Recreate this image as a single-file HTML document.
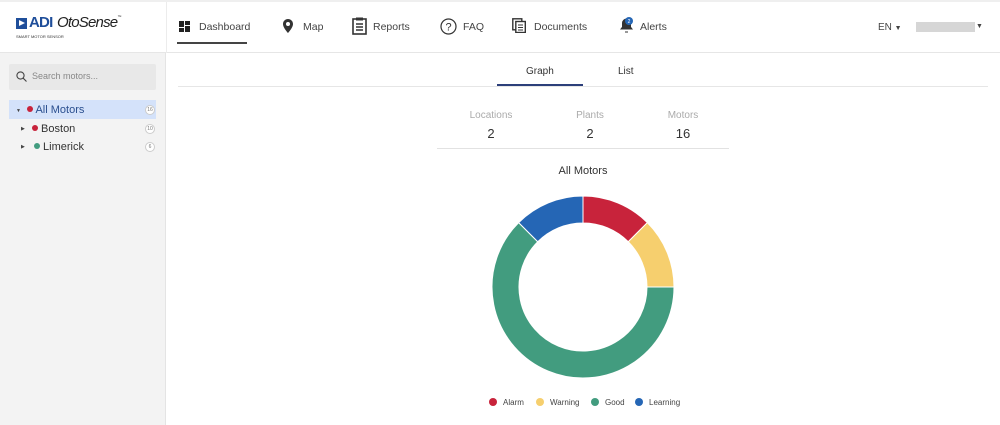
<!DOCTYPE html>
<html><head><meta charset="utf-8"><style>
*{box-sizing:border-box;margin:0;padding:0}
body{width:1000px;height:425px;overflow:hidden;background:#fff;font-family:"Liberation Sans",sans-serif;color:#333;position:relative}
.abs{position:absolute}
.top{left:0;top:0;width:1000px;height:2px;background:#efefef}
.hdr{left:0;top:52px;width:1000px;height:1px;background:#e6e6e6}
.side{left:0;top:53px;width:166px;height:372px;background:#f3f3f3;border-right:1px solid #e4e4e4}
.vline{left:166px;top:2px;width:1px;height:51px;background:#ececec}
.nav{font-size:10.5px;color:#444;top:21px}
.search{left:9px;top:64px;width:147px;height:26px;background:#e8e8e8;border-radius:2px}
.tree{font-size:11px;color:#333}
.dot{display:inline-block;width:6px;height:6px;border-radius:50%}
.badge{width:10px;height:10px;border-radius:50%;border:1px solid #ccc;font-size:5px;text-align:center;line-height:8px;color:#777;background:#fff}
.lbl{font-size:10px;color:#aaa;text-align:center;width:80px}
.num{font-size:13px;color:#333;text-align:center;width:80px}
.leg{font-size:8px;color:#444;top:398px}
.ld{display:inline-block;width:8px;height:8px;border-radius:50%;vertical-align:-1px;margin-right:6px}
</style></head><body>
<div class="abs top"></div>
<div class="abs hdr"></div>
<div class="abs vline"></div>
<div class="abs" style="left:16px;top:18px;width:11px;height:11px;background:#1f4e9a"></div>
<div class="abs" style="left:19px;top:20px;width:0;height:0;border-left:6px solid #fff;border-top:3.5px solid transparent;border-bottom:3.5px solid transparent"></div>
<div class="abs" style="left:29px;top:14px;font-size:15px;font-weight:bold;color:#1f4e9a;letter-spacing:-0.8px">ADI</div>
<div class="abs" style="left:57px;top:14px;font-size:15px;font-style:italic;color:#222;letter-spacing:-0.8px">OtoSense<span style="font-size:4px;vertical-align:top">™</span></div>
<div class="abs" style="left:16px;top:34px;font-size:4px;color:#333">SMART MOTOR SENSOR</div>
<svg class="abs" style="left:179px;top:21px" width="11" height="11"><rect x="0" y="0" width="5" height="6" fill="#222"/><rect x="6" y="0" width="5" height="4" fill="#222"/><rect x="0" y="7" width="5" height="4" fill="#222"/><rect x="6" y="5" width="5" height="6" fill="#222"/></svg>
<div class="abs nav" style="left:199px">Dashboard</div>
<div class="abs" style="left:177px;top:42px;width:70px;height:2px;background:#444"></div>
<svg class="abs" style="left:283px;top:19px" width="10" height="14"><path d="M5 0C2.2 0 0 2.2 0 5c0 3.7 5 9 5 9s5-5.3 5-9C10 2.2 7.8 0 5 0zm0 7a2 2 0 110-4 2 2 0 010 4z" fill="#333"/></svg>
<div class="abs nav" style="left:303px">Map</div>
<svg class="abs" style="left:352px;top:17px" width="15" height="18"><rect x="1" y="2" width="13" height="15" fill="none" stroke="#333" stroke-width="1.6"/><rect x="4" y="0.5" width="7" height="3" fill="#333"/><path d="M4 7h7M4 10h7M4 13h7" stroke="#333" stroke-width="1.4"/></svg>
<div class="abs nav" style="left:373px">Reports</div>
<svg class="abs" style="left:440px;top:18px" width="17" height="17"><circle cx="8.5" cy="8.5" r="7.5" fill="none" stroke="#333" stroke-width="1.2"/><text x="8.5" y="12.5" font-size="11" text-anchor="middle" fill="#333" font-family="Liberation Sans">?</text></svg>
<div class="abs nav" style="left:463px">FAQ</div>
<svg class="abs" style="left:512px;top:18px" width="14" height="15"><rect x="0.8" y="0.8" width="9" height="11" fill="none" stroke="#333" stroke-width="1.4"/><rect x="3.8" y="3.5" width="9.5" height="11" fill="#fff" stroke="#333" stroke-width="1.4"/><path d="M6 7h5M6 9.5h5M6 12h5" stroke="#333" stroke-width="1"/></svg>
<div class="abs nav" style="left:534px">Documents</div>
<svg class="abs" style="left:619px;top:16px" width="16" height="17"><path d="M6 16h3M2 13h11l-1.5-2V7a4 4 0 00-8 0v4z" fill="#333" stroke="#333"/><circle cx="10" cy="5" r="4" fill="#2566b5"/><text x="10" y="7" font-size="5" fill="#fff" text-anchor="middle" font-family="Liberation Sans">2</text></svg>
<div class="abs nav" style="left:640px">Alerts</div>
<div class="abs nav" style="left:878px;font-size:10px;top:22px">EN <span style="font-size:7px">▼</span></div>
<div class="abs" style="left:916px;top:22px;width:59px;height:10px;background:#d6d6d6"></div>
<div class="abs" style="left:976px;top:23px;font-size:7px;color:#444">▼</div>
<div class="abs side"></div>
<div class="abs search"></div>
<svg class="abs" style="left:16px;top:71px" width="11" height="11"><circle cx="4.5" cy="4.5" r="3.6" fill="none" stroke="#444" stroke-width="1.1"/><path d="M7.2 7.2L10.5 10.5" stroke="#444" stroke-width="1.1"/></svg>
<div class="abs" style="left:32px;top:71px;font-size:9px;color:#888">Search motors...</div>
<div class="abs" style="left:9px;top:100px;width:147px;height:19px;background:#d4e2fa"></div>
<div class="abs" style="left:16px;top:108px;font-size:5px;color:#444">▼</div>
<div class="abs tree" style="left:27px;top:104px"><span class="dot" style="background:#c8233b;vertical-align:1px"></span> <span style="color:#2a4f8f">All Motors</span></div>
<div class="abs badge" style="left:145px;top:105px">16</div>
<div class="abs" style="left:21px;top:126px;font-size:5px;color:#444">▶</div>
<div class="abs tree" style="left:32px;top:123px"><span class="dot" style="background:#c8233b;vertical-align:1px"></span> Boston</div>
<div class="abs badge" style="left:145px;top:124px">10</div>
<div class="abs" style="left:21px;top:144px;font-size:5px;color:#444">▶</div>
<div class="abs tree" style="left:34px;top:141px"><span class="dot" style="background:#429c7f;vertical-align:1px"></span> Limerick</div>
<div class="abs badge" style="left:145px;top:142px">6</div>
<div class="abs" style="left:526px;top:66px;font-size:10px;color:#333">Graph</div>
<div class="abs" style="left:618px;top:66px;font-size:10px;color:#333">List</div>
<div class="abs" style="left:178px;top:86px;width:810px;height:1px;background:#e6e6e6"></div>
<div class="abs" style="left:497px;top:84px;width:86px;height:2px;background:#2c3f7a"></div>
<div class="abs lbl" style="left:451px;top:110px">Locations</div>
<div class="abs num" style="left:451px;top:126px">2</div>
<div class="abs lbl" style="left:550px;top:110px">Plants</div>
<div class="abs num" style="left:550px;top:126px">2</div>
<div class="abs lbl" style="left:643px;top:110px">Motors</div>
<div class="abs num" style="left:643px;top:126px">16</div>
<div class="abs" style="left:437px;top:148px;width:292px;height:1px;background:#e2e2e2"></div>
<div class="abs" style="left:533px;top:165px;width:100px;text-align:center;font-size:11px;color:#333">All Motors</div>
<svg class="abs" style="left:0;top:0" width="1000" height="425">
<g stroke="#fff" stroke-width="1">
<path d="M583,196 A91,91 0 0 1 647.35,222.65 L628.25,241.75 A64,64 0 0 0 583,223 Z" fill="#c8233b"/>
<path d="M647.35,222.65 A91,91 0 0 1 674,287 L647,287 A64,64 0 0 0 628.25,241.75 Z" fill="#f6cf6e"/>
<path d="M674,287 A91,91 0 1 1 518.65,222.65 L537.75,241.75 A64,64 0 1 0 647,287 Z" fill="#429c7f"/>
<path d="M518.65,222.65 A91,91 0 0 1 583,196 L583,223 A64,64 0 0 0 537.75,241.75 Z" fill="#2566b5"/>
</g></svg>
<div class="abs leg" style="left:489px"><span class="ld" style="background:#c8233b"></span>Alarm</div>
<div class="abs leg" style="left:536px"><span class="ld" style="background:#f6cf6e"></span>Warning</div>
<div class="abs leg" style="left:591px"><span class="ld" style="background:#429c7f"></span>Good</div>
<div class="abs leg" style="left:635px"><span class="ld" style="background:#2566b5"></span>Learning</div>
</body></html>
